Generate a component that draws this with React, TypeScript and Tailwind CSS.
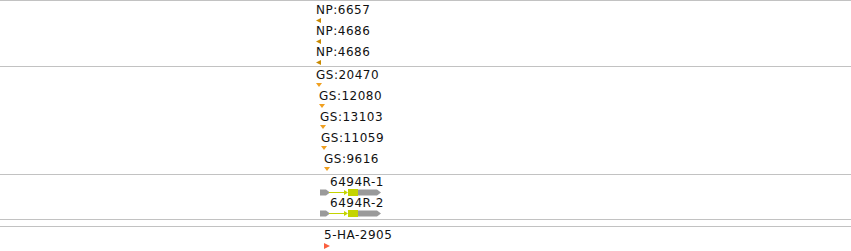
import React from 'react';

type Mark = 'left' | 'down' | 'right';
type Label = { text: string; offset: number };

const np: Label[] = [
  { text: 'NP:6657', offset: 0 },
  { text: 'NP:4686', offset: 0 },
  { text: 'NP:4686', offset: 0 },
];

const gs: Label[] = [
  { text: 'GS:20470', offset: 0 },
  { text: 'GS:12080', offset: 3 },
  { text: 'GS:13103', offset: 4 },
  { text: 'GS:11059', offset: 5 },
  { text: 'GS:9616', offset: 8 },
];

const Glyph: React.FC<{ kind: Mark; color: string }> = ({ kind, color }) => {
  if (kind === 'left')
    return (
      <svg width="5" height="5" viewBox="0 0 5 5" className="block">
        <polygon points="5,0 5,5 0,2.5" fill={color} />
      </svg>
    );
  if (kind === 'down')
    return (
      <svg width="6" height="4" viewBox="0 0 6 4" className="block">
        <polygon points="0,0 6,0 3,4" fill={color} />
      </svg>
    );
  return (
    <svg width="6" height="6" viewBox="0 0 6 6" className="block">
      <polygon points="0,0 6,3 0,6" fill={color} />
    </svg>
  );
};

const Feature: React.FC<{ item: Label; kind: Mark; color: string }> = ({ item, kind, color }) => (
  <div className="flex flex-col items-start" style={{ marginLeft: item.offset }}>
    <span className="text-[12px] leading-[12px] text-[#111] whitespace-nowrap tracking-[0.5px]">{item.text}</span>
    <div className="mt-[2px]">
      <Glyph kind={kind} color={color} />
    </div>
  </div>
);

const Gene: React.FC<{ name: string }> = ({ name }) => (
  <div className="flex flex-col items-start">
    <span className="ml-[10px] text-[12px] leading-[12px] text-[#111] whitespace-nowrap tracking-[0.5px]">{name}</span>
    <svg width="62" height="7" viewBox="0 0 62 7" className="block mt-[1px]">
      <polygon points="0,0.5 6,0.5 10,3.5 6,6.5 0,6.5" fill="#9a9a9a" />
      <line x1="9" y1="3.5" x2="27" y2="3.5" stroke="#c4d400" strokeWidth="1" />
      <polygon points="24,1 28,3.5 24,6" fill="#c4d400" />
      <rect x="28" y="0" width="10" height="7" fill="#c4d400" />
      <polygon points="38,0.5 57,0.5 61,3.5 57,6.5 38,6.5" fill="#9a9a9a" />
    </svg>
  </div>
);

export default function App() {
  return (
    <div className="w-[851px] h-[251px] bg-white font-['DejaVu_Sans',sans-serif] overflow-hidden">
      <div className="h-[67px] border-y border-[#c2c2c2] flex flex-col gap-[2px] pl-[316px] pt-[3px]">
        {np.map((f, i) => (
          <Feature key={i} item={f} kind="left" color="#c98a00" />
        ))}
      </div>
      <div className="h-[108px] border-b border-[#c2c2c2] flex flex-col gap-[3px] pl-[316px] pt-[2px]">
        {gs.map((f, i) => (
          <Feature key={i} item={f} kind="down" color="#f0a020" />
        ))}
      </div>
      <div className="h-[45px] border-b border-[#c2c2c2] flex flex-col gap-[1px] pl-[320px] pt-[1px]">
        <Gene name="6494R-1" />
        <Gene name="6494R-2" />
      </div>
      <div className="h-[31px] mt-[6px] border-y border-[#c2c2c2] pl-[324px] pt-[2px]">
        <Feature item={{ text: '5-HA-2905', offset: 0 }} kind="right" color="#fa6040" />
      </div>
    </div>
  );
}
